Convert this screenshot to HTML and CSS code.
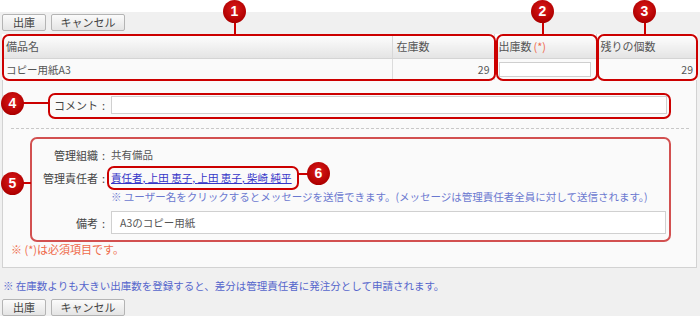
FILE: index.html
```html
<!DOCTYPE html>
<html>
    <head>
        <meta charset="utf-8">
        <link rel="stylesheet" href="styles.css">
    </head>
    <body>
        <div class="page">
            <div class="toolbar">
                <button class="btn btn-ok">出庫</button>
                <button class="btn btn-cancel">キャンセル</button>
            </div>

            <table class="grid">
                <thead>
                    <tr>
                        <th class="col-name">備品名</th>
                        <th class="col-stock">在庫数</th>
                        <th class="col-out">出庫数<span class="req">(*)</span></th>
                        <th class="col-rest">残りの個数</th>
                    </tr>
                </thead>
                <tbody>
                    <tr>
                        <td class="col-name">コピー用紙A3</td>
                        <td class="col-stock num">29</td>
                        <td class="col-out"><input class="out-input" type="text"></td>
                        <td class="col-rest num">29</td>
                    </tr>
                </tbody>
            </table>

            <div class="panel">
                <div class="form-row comment-row">
                    <span class="label">コメント<span class="colon">:</span></span>
                    <input class="text-input comment-input" type="text">
                </div>
                <div class="dash"></div>
                <div class="info">
                    <div class="form-row info-row">
                        <span class="label">管理組織<span class="colon">:</span></span>
                        <span class="value">共有備品</span>
                    </div>
                    <div class="form-row info-row">
                        <span class="label">管理責任者<span class="colon">:</span></span>
                        <span class="value users"><a href="#">責任者</a>, <a href="#">上田 恵子</a>, <a href="#">上田 恵子</a>, <a href="#">柴崎 純平</a></span>
                    </div>
                    <div class="form-row hint-row">
                        <span></span>
                        <span class="hint">※ ユーザー名をクリックするとメッセージを送信できます。(メッセージは管理責任者全員に対して送信されます。)</span>
                    </div>
                    <div class="form-row memo-row">
                        <span class="label">備考<span class="colon">:</span></span>
                        <div class="text-input memo-input">A3のコピー用紙</div>
                    </div>
                </div>
                <p class="required">※ (*)は必須項目です。</p>
            </div>

            <p class="note">※ 在庫数よりも大きい出庫数を登録すると、差分は管理責任者に発注分として申請されます。</p>

            <div class="toolbar">
                <button class="btn btn-ok">出庫</button>
                <button class="btn btn-cancel">キャンセル</button>
            </div>

            <!-- callouts -->
            <div class="box box-1"></div>
            <div class="box box-2"></div>
            <div class="box box-3"></div>
            <div class="box box-4"></div>
            <div class="box box-5"></div>
            <div class="box box-6"></div>

            <div class="stem stem-v stem-1"></div>
            <div class="stem stem-v stem-2"></div>
            <div class="stem stem-v stem-3"></div>
            <div class="stem stem-h stem-4"></div>
            <div class="stem stem-h stem-5"></div>
            <div class="stem stem-h stem-6"></div>

            <span class="badge badge-1">1</span>
            <span class="badge badge-2">2</span>
            <span class="badge badge-3">3</span>
            <span class="badge badge-4">4</span>
            <span class="badge badge-5">5</span>
            <span class="badge badge-6">6</span>
        </div>
    </body>
</html>
```

FILE: styles.css
```css
* {
    box-sizing: border-box;
}

html {
    background: linear-gradient(#ffffff 12px, #f0f0f0 12px);
}

body {
    margin: 0;
    font-family: 'Noto Sans CJK JP', 'Noto Sans', sans-serif;
    font-size: 10.5px;
    color: #555;
}

.page {
    position: relative;
    width: 700px;
    height: 316px;
    padding: 14px 3px 0 2px;
}

.toolbar {
    display: flex;
    gap: 5px;
    height: 17px;
}

.btn {
    height: 17px;
    padding: 0;
    border: 1px solid #b4b4b4;
    border-radius: 2px;
    background: linear-gradient(#fbfbfb, #e4e4e4);
    font-family: inherit;
    font-size: 11px;
    line-height: 15px;
    color: #444;
}

.btn-ok {
    width: 44px;
}

.btn-cancel {
    width: 74px;
}

/* grid */

.grid {
    margin-top: 3px;
    width: 695px;
    border-collapse: collapse;
    table-layout: fixed;
}

.grid th,
.grid td {
    padding: 0 4px;
    text-align: left;
    font-weight: normal;
    white-space: nowrap;
}

.grid th {
    height: 24px;
    background: linear-gradient(#ffffff, #e4e4e4);
    border-left: 1px solid #d8d8d8;
    border-bottom: 1px solid #d4d4d4;
    font-size: 11px;
}

.grid td {
    height: 22px;
    background: #fafafa;
    border-left: 1px solid #dcdcdc;
}

.grid .col-name {
    width: 390px;
    border-left: none;
}

.grid .col-stock,
.grid .col-out {
    width: 102px;
}

.grid td.num {
    text-align: right;
}

.req {
    color: #ef6a4a;
    margin-left: 2px;
}

.out-input {
    display: block;
    width: 92px;
    height: 15px;
    border: 1px solid #cfcfcf;
    background: #fff;
}

/* panel */

.panel {
    width: 695px;
    height: 188px;
    padding-top: 16px;
    background: #fafafa;
    border: 1px solid #d2d2d2;
    border-top: none;
}

.form-row {
    display: grid;
    grid-template-columns: 108px 1fr;
    align-items: center;
}

.label {
    text-align: right;
    padding-right: 6px;
    font-size: 11px;
    color: #444;
    white-space: nowrap;
}

.colon {
    margin-left: 4px;
}

.text-input {
    border: 1px solid #d0d0d0;
    background: #fff;
}

.comment-row {
    height: 18px;
}

.comment-input {
    width: 556px;
    height: 18px;
}

.dash {
    margin: 14px 7px 0 8px;
    border-top: 1px dashed #c8c8c8;
}

.info {
    margin-top: 14px;
}

.info-row {
    height: 23px;
}

.value {
    color: #555;
}

.users {
    color: #3535c8;
    text-decoration: underline;
}

.users a {
    color: #3535c8;
}

.hint-row {
    height: 13px;
}

.hint {
    color: #6a78d0;
    white-space: nowrap;
}

.memo-row {
    margin-top: 9px;
}

.memo-input {
    width: 555px;
    height: 23px;
    padding-left: 8px;
    line-height: 21px;
}

.required {
    margin: 7px 0 0 8px;
    font-size: 11px;
    color: #ef6a4a;
}

.note {
    margin: 9px 0 4px 1px;
    height: 18px;
    line-height: 18px;
    color: #5566cc;
}

/* callouts */

.box {
    position: absolute;
    border: 2px solid #cc0000;
    border-radius: 7px;
}

.box-1 { left: 2px;   top: 34px;  width: 494px; height: 47px; }
.box-2 { left: 496px; top: 34px;  width: 102px; height: 47px; }
.box-3 { left: 597px; top: 34px;  width: 101px; height: 47px; }
.box-4 { left: 48px;  top: 93px;  width: 623px; height: 26px; }
.box-5 { left: 30px;  top: 137px; width: 641px; height: 105px; border-color: #d25050; }
.box-6 { left: 107px; top: 166px; width: 192px; height: 24px; }

.stem {
    position: absolute;
    background: #cc0000;
}

.stem-v { width: 2px; }
.stem-h { height: 2px; }

.stem-1 { left: 234px; top: 20px;  height: 15px; }
.stem-2 { left: 542px; top: 20px;  height: 15px; }
.stem-3 { left: 644px; top: 20px;  height: 15px; }
.stem-4 { left: 20px;  top: 102px; width: 29px; }
.stem-5 { left: 20px;  top: 182px; width: 11px; }
.stem-6 { left: 298px; top: 173px; width: 12px; }

.badge {
    position: absolute;
    width: 23px;
    height: 23px;
    border-radius: 50%;
    background: radial-gradient(circle at 50% 40%, #dc1a1a, #b00000 70%, #8c0000);
    color: #fff;
    font-family: 'Liberation Sans', sans-serif;
    font-size: 14px;
    font-weight: bold;
    line-height: 23px;
    text-align: center;
}

.badge-1 { left: 223px; top: 0; }
.badge-2 { left: 531px; top: 0; }
.badge-3 { left: 633px; top: 0; }
.badge-4 { left: 1px;   top: 92px; }
.badge-5 { left: 1px;   top: 172px; }
.badge-6 { left: 307px; top: 162px; }
```
